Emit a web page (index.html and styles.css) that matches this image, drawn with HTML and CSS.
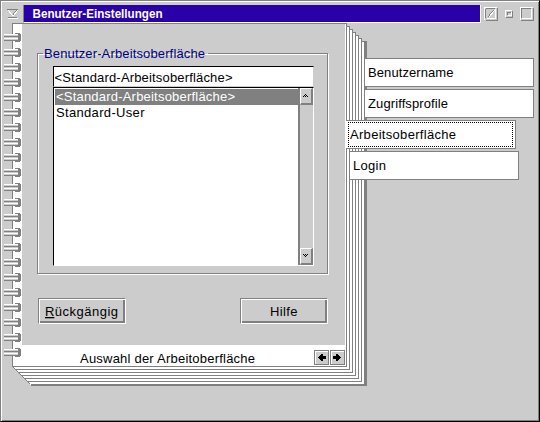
FILE: index.html
```
<!DOCTYPE html>
<html lang="de">
<head>
<meta charset="utf-8">
<title>Benutzer-Einstellungen</title>
<link rel="stylesheet" href="styles.css">
</head>
<body>
<div class="window">
  <header class="titlebar">
    <svg class="sysmenu" width="21" height="18" shape-rendering="crispEdges"><path d="M5.5 4.5h10l-5 6z" fill="#ccc" stroke="#808080"/><path d="M6 5l5 6 5-6M6 13.5h10" fill="none" stroke="#fff"/><path d="M6 12.5h9" stroke="#808080"/></svg>
    <h1 class="title"><svg width="200" height="17"><text x="8.500" y="13" textLength="130" lengthAdjust="spacingAndGlyphs">Benutzer-Einstellungen</text></svg></h1>
    <svg class="controls" width="57" height="18" shape-rendering="crispEdges" fill="none"><path d="M3.500 15V2.500H16" stroke="#fff"/><path d="M4.500 15.500h12v-13M4.500 4v9M5 3.500h9M7 12l6-7" stroke="#808080"/><path d="M6 13.500h8.500V4M8 12l6-7" stroke="#fff"/><path d="M24.500 12V5.500H31M27 10.500h3.500V7" stroke="#fff"/><path d="M24.500 12.500h7v-7M26.500 10V7.500H30" stroke="#808080"/><path d="M39.500 15V2.500H52M41 13.500h9.500V4" stroke="#fff"/><path d="M39.500 15.500h13v-13M40.500 13V3.500H50" stroke="#808080"/></svg>
  </header>
  <main class="client">
    <svg class="sheets" width="538" height="398" viewBox="0 23 538 398" shape-rendering="crispEdges">
      <path d="M346 23h1v3h3v3h3v3h3v3h3v3h3v3h5v345H31L12 366V23z" fill="#fff"/>
      <path d="M364 41h3v345H31v-2h333z" fill="#808080"/>
      <path d="M12.500 366V23.500h334v343H12.500M347 26.500h2.500v343H16M350 29.500h2.500v343H19M353 32.500h2.500v343H22M356 35.500h2.500v343H25M359 38.500h2.500v343H28M362 41.500h3M12.500 366.500l18 18" fill="none" stroke="#808080"/>
    </svg>
    <svg class="rings" width="20" height="345" shape-rendering="crispEdges"><defs><pattern id="ring" width="20" height="15" patternUnits="userSpaceOnUse" y="9"><path d="M0 1h15v7H0z" fill="#ccc"/><path d="M11 0h5v1h1v7h-1v1h-5V6H0V5h11v2h3V2h-3z" fill="#808080"/><path d="M0 1h14v1H0zM0 5h14v1H0z" fill="#fff"/><path d="M0 3h14v1H0zM0 7h14v1H0z" fill="#808080"/></pattern></defs><path d="M0 9h20v330H0z" fill="url(#ring)"/></svg>
    <section class="page">
      <div class="content">
        <fieldset class="group">
          <legend><svg width="165" height="17"><text x="1" y="13" textLength="161">Benutzer-Arbeitsoberfläche</text></svg></legend>
          <div class="entry"><svg width="250" height="18"><text x="0.500" y="15" textLength="178">&lt;Standard-Arbeitsoberfläche&gt;</text></svg></div>
          <div class="listbox">
            <div class="options">
              <div class="option selected"><svg width="240" height="16"><text x="1" y="12" textLength="179">&lt;Standard-Arbeitsoberfläche&gt;</text></svg></div>
              <div class="option"><svg width="240" height="16"><text x="1" y="12" textLength="88.500">Standard-User</text></svg></div>
            </div>
            <div class="scrollbar">
              <span class="scrollbutton"><svg width="8" height="6" shape-rendering="crispEdges"><path d="M1 3h1v1H1zM2 2h1v1H2zM3 1h1v1H3zM4 2h1v1H4zM5 3h1v1H5zM3 3h1v1H3z"/></svg></span>
              <span class="scrollbutton"><svg width="8" height="6" shape-rendering="crispEdges"><path d="M1 1h1v1H1zM2 2h1v1H2zM3 3h1v1H3zM4 2h1v1H4zM5 1h1v1H5zM3 1h1v1H3z"/></svg></span>
            </div>
          </div>
        </fieldset>
        <div class="actions">
          <button><svg width="82" height="21"><text x="3" y="15" textLength="73"><tspan class="mnemonic">R</tspan>ückgängig</text></svg></button>
          <button><svg width="82" height="21"><text x="26" y="15" textLength="27.500">Hilfe</text></svg></button>
        </div>
      </div>
      <footer class="footer">
        <svg width="250" height="20"><text x="58" y="18" textLength="175">Auswahl der Arbeitoberfläche</text></svg>
        <div class="pager">
          <span class="turn"><svg width="11" height="11" shape-rendering="crispEdges"><path d="M2 5h1V4h1V3h1V2h2v2h3v3H7v2H5V8H4V7H3V6H2z"/></svg></span>
          <span class="turn"><svg width="11" height="11" shape-rendering="crispEdges"><path d="M9 5H8V4H7V3H6V2H4v2H1v3h3v2h2V8h1V7h1V6h1z"/></svg></span>
        </div>
      </footer>
    </section>
    <nav class="tabs">
      <div class="tab back"><svg width="160" height="27"><text x="3" y="18" textLength="85.500">Benutzername</text></svg></div>
      <div class="tab back"><svg width="160" height="27"><text x="3" y="18" textLength="80">Zugriffsprofile</text></svg></div>
      <div class="tab active"><svg width="163" height="23"><text x="1" y="16" textLength="106">Arbeitsoberfläche</text></svg></div>
      <div class="tab front"><svg width="160" height="27"><text x="3" y="18" textLength="33">Login</text></svg></div>
    </nav>
  </main>
</div>
</body>
</html>
```
FILE: styles.css
```
* { box-sizing: border-box; }
body { margin: 0; width: 540px; height: 422px; overflow: hidden; background: #ccc; font: 13px "Liberation Sans", sans-serif; }
svg { display: block; flex: none; overflow: visible; }
.window { width: 540px; height: 422px; padding: 0 1px; border: 1px solid #808080; border-right-color: #000; border-bottom-color: #000; box-shadow: inset 1px 1px #fff, inset -1px -1px #808080; }
.titlebar { display: flex; height: 22px; padding-top: 4px; }
.title { flex: 1; margin: 0; height: 18px; background: #2a00a8; border-left: 1px solid #808080; border-right: 1px solid #fff; border-bottom: 1px solid #fff; line-height: 17px; }
.title text { fill: #fff; font: bold 13px "Liberation Sans", sans-serif; }
.client { position: relative; display: flex; height: 397px; }
.sheets { position: absolute; left: -2px; top: 0; }
.rings { position: absolute; left: 2px; top: 1px; z-index: 1; }
.page { position: relative; width: 335px; height: 344px; margin-left: 10px; border: 1px solid #808080; background: #fff; flex: none; }
.content { height: 321px; margin-left: 9px; margin-right: 1px; padding: 21px 17px 0 15px; background: #ccc; }
.group { position: relative; margin: 0; height: 229px; padding: 4px 14px 0 15px; border: 1px solid #808080; box-shadow: 1px 1px #fff, inset 1px 1px #fff; min-width: 0; }
.group legend { padding: 0; margin-left: -10px; height: 17px; }
.group legend text { fill: #000080; }
.entry { width: 261px; height: 21px; background: #fff; border: 1px solid #000; border-right-color: #ccc; border-bottom-color: #ccc; }
.listbox { display: flex; width: 261px; height: 179px; border: 1px solid #000; border-right-color: #fff; border-bottom-color: #fff; background: #fff; }
.options { flex: 1; padding-top: 1px; min-width: 0; }
.option { height: 16px; margin-left: 1px; }
.selected { background: #808080; }
.selected text { fill: #fff; }
.scrollbar { display: flex; flex-direction: column; justify-content: space-between; width: 15px; background: #ccc; border-left: 2px solid #808080; }
.scrollbutton { display: grid; place-items: center; width: 13px; height: 17px; border: 1px solid #fff; border-right: 2px solid #808080; border-bottom: 2px solid #808080; background: #ccc; }
.actions { display: flex; justify-content: space-between; margin: 24px 0 0 1px; }
button { padding: 0; width: 88px; height: 26px; border: 1px solid #808080; border-right-color: #fff; border-bottom-color: #fff; background: #ccc; box-shadow: inset 1px 1px #fff, inset -2px -2px #808080; font: inherit; }
button svg { margin-left: 3px; }
.mnemonic { text-decoration: underline; }
.footer { display: flex; justify-content: space-between; height: 21px; padding: 0 1px 0 9px; }
.pager { display: flex; gap: 1px; padding-top: 5px; }
.turn { display: grid; place-items: center; width: 15px; height: 15px; background: #ccc; border: 1px solid #808080; box-shadow: inset 1px 1px #fff; }
.tabs { position: relative; display: flex; flex-direction: column; gap: 2px; padding-top: 35px; margin-left: -1px; }
.tab { height: 29px; width: 170px; background: #fff; border: 1px solid #808080; }
.back { margin-left: 18px; }
.active { border-left: 0; padding: 1px; }
.active svg { outline: 1px dotted #000; outline-offset: 0; margin: 1px 1px 1px 2px; }
.front { margin-left: 3px; }
```
